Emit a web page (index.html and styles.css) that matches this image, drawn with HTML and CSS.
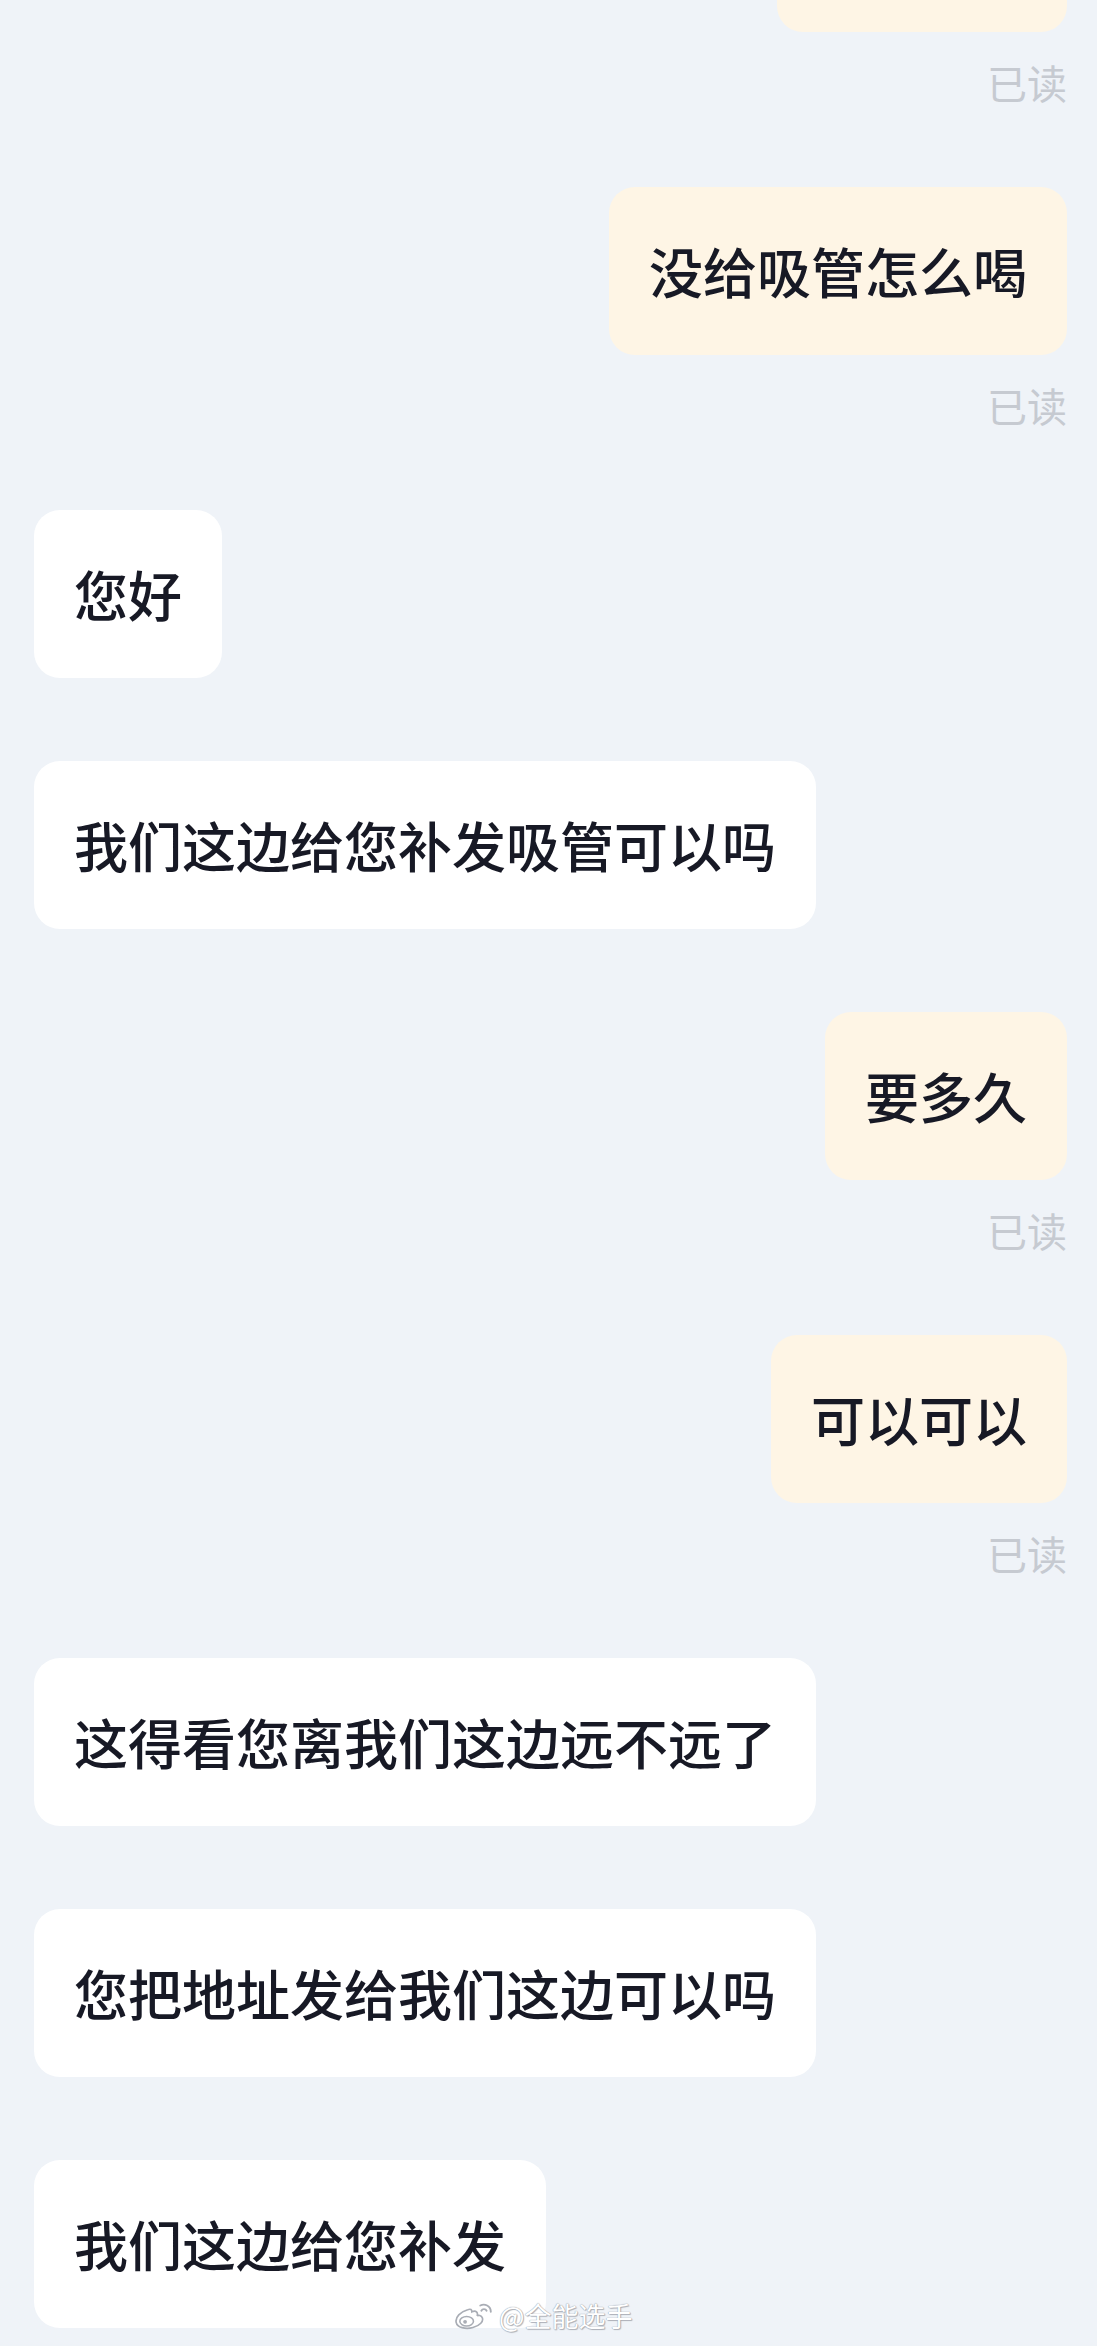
FILE: index.html
```html
<!DOCTYPE html>
<html lang="zh-CN">
<head>
<meta charset="utf-8">
<title>聊天记录</title>
<link rel="stylesheet" href="styles.css">
</head>
<body>
<div class="screen">
  <div class="chat">
    <div class="group out">
      <div class="bubble partial" aria-hidden="true"></div>
      <div class="read">已读</div>
    </div>
    <div class="group out">
      <div class="bubble">没给吸管怎么喝</div>
      <div class="read">已读</div>
    </div>
    <div class="group in">
      <div class="bubble">您好</div>
    </div>
    <div class="group in">
      <div class="bubble">我们这边给您补发吸管可以吗</div>
    </div>
    <div class="group out">
      <div class="bubble">要多久</div>
      <div class="read">已读</div>
    </div>
    <div class="group out">
      <div class="bubble">可以可以</div>
      <div class="read">已读</div>
    </div>
    <div class="group in">
      <div class="bubble">这得看您离我们这边远不远了</div>
    </div>
    <div class="group in">
      <div class="bubble">您把地址发给我们这边可以吗</div>
    </div>
    <div class="group in">
      <div class="bubble">我们这边给您补发</div>
    </div>
  </div>
  <div class="watermark">
    <svg class="wb-logo" width="42" height="28" viewBox="0 0 40 26">
      <path d="M14 7 C7 9 2 14 3 19 C4 24 12 26 19 24 C26 22 29 18 28 15 C27 12 24 12 23 13 C24 10 22 7 18 9 C18 7 17 6 14 7 Z" fill="#ffffff" stroke="#a9adb5" stroke-width="1.6"/>
      <ellipse cx="13" cy="18" rx="6.5" ry="4.5" fill="#ffffff" stroke="#a9adb5" stroke-width="1.5"/>
      <circle cx="11.5" cy="18.5" r="1.8" fill="#a9adb5"/>
      <path d="M27 8 C28 6 31 6 32 8" fill="none" stroke="#a9adb5" stroke-width="1.8" stroke-linecap="round"/>
      <path d="M26 3 C30 1 36 3 36 9" fill="none" stroke="#a9adb5" stroke-width="1.8" stroke-linecap="round"/>
    </svg>
    <span class="wb-name">@全能选手</span>
  </div>
</div>
</body>
</html>
```

FILE: styles.css
```css
html, body {
  margin: 0;
  padding: 0;
}

body {
  background: #eff3f8;
  font-family: "Noto Sans CJK SC", "Noto Sans", sans-serif;
  overflow: hidden;
}

.screen {
  position: relative;
  width: 1097px;
  height: 2346px;
  overflow: hidden;
  background: #eff3f8;
}

.chat {
  display: flex;
  flex-direction: column;
  gap: 83px;
  margin-top: -136px;
  padding: 0 30px 0 34px;
}

.group {
  display: flex;
  flex-direction: column;
}

.group.out {
  align-items: flex-end;
}

.group.in {
  align-items: flex-start;
}

.bubble {
  font-size: 54px;
  font-weight: 500;
  line-height: 60px;
  padding: 54px 40px;
  border-radius: 26px;
  color: #171925;
  white-space: nowrap;
}

.bubble.partial {
  width: 210px;
  height: 60px;
}

.out .bubble {
  background: #fef5e5;
}

.in .bubble {
  background: #ffffff;
}

.read {
  margin-top: 28px;
  font-size: 40px;
  line-height: 44px;
  color: #c6cad1;
}

.watermark {
  position: absolute;
  left: 453px;
  top: 2300px;
  display: flex;
  align-items: center;
  gap: 4px;
}

.wb-name {
  font-size: 27px;
  line-height: 32px;
  color: #ffffff;
  text-shadow: 0 0 1px #9ea3ab, 0 0 1px #9ea3ab, 1px 1px 1px #b0b4bb;
}
```
